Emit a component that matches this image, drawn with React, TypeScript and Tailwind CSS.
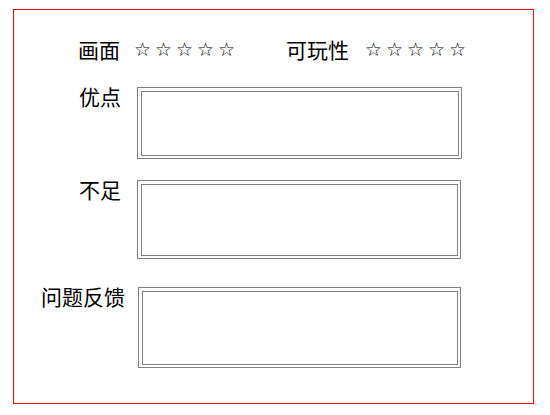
import React from "react";

const STARS = [1, 2, 3, 4, 5];

function Stars() {
  return (
    <div className="flex items-center">
      {STARS.map((s) => (
        <span key={s} className="w-[21px] text-[19px] leading-[21px] text-black font-['DejaVu_Sans',sans-serif]">
          ☆
        </span>
      ))}
    </div>
  );
}

// 文本框：外框 + 内框（双线效果）
function Box({ w, h }: { w: number; h: number }) {
  return (
    <div
      className="flex border border-[#808080] pt-[3px] pl-[3px] pr-[2px] pb-[2px] bg-white"
      style={{ width: w, height: h }}
    >
      <textarea className="flex-1 resize-none border border-[#808080] outline-none" />
    </div>
  );
}

function Row({
  label,
  w,
  h,
  labelW = 108,
  gap = 15,
  className,
}: {
  label: string;
  w: number;
  h: number;
  labelW?: number;
  gap?: number;
  className?: string;
}) {
  return (
    <div className={`flex items-start ${className ?? ""}`}>
      <div className="shrink-0 text-right text-[21px] leading-[21px] mt-[-1px] whitespace-nowrap" style={{ width: labelW }}>
        {label}
      </div>
      <div style={{ marginLeft: gap }}>
        <Box w={w} h={h} />
      </div>
    </div>
  );
}

export default function App() {
  return (
    <div className="w-[550px] h-[415px] bg-white text-black font-['Noto_Sans_CJK_SC',sans-serif]">
      <div className="ml-[13px] mt-[9px] w-[521px] h-[395px] border border-[#ff0000] pt-[29px] inline-block align-top">
        {/* 评分 */}
        <div className="flex items-center">
          <div className="w-[106px] text-right text-[21px] leading-[21px]">画面</div>
          <div className="ml-[14px]">
            <Stars />
          </div>
          <div className="ml-[47px] text-[21px] leading-[21px]">可玩性</div>
          <div className="ml-[16px]">
            <Stars />
          </div>
        </div>

        <Row label="优点" w={325} h={72} labelW={107} gap={16} className="mt-[27px]" />
        <Row label="不足" w={324} h={79} labelW={107} gap={16} className="mt-[21px]" />
        <Row label="问题反馈" w={323} h={81} labelW={111} gap={13} className="mt-[28px]" />
      </div>
    </div>
  );
}
